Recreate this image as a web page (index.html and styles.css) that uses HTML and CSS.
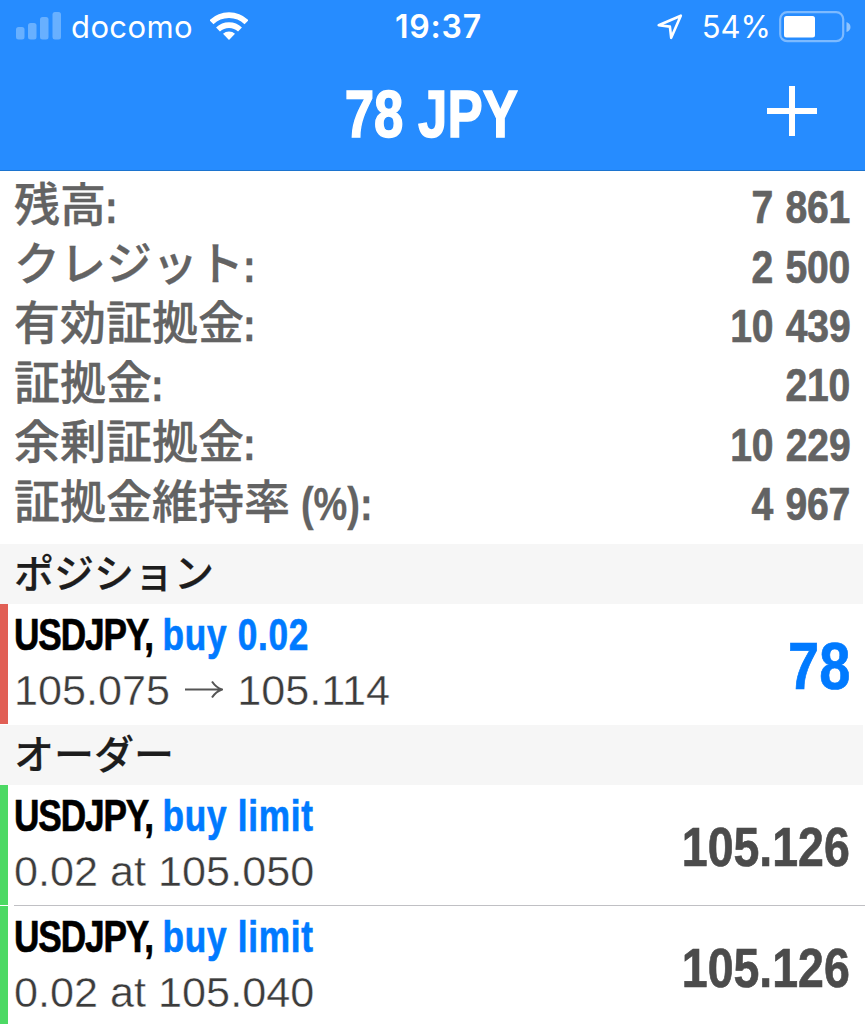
FILE: index.html
```html
<!DOCTYPE html>
<html lang="ja">
<head>
<meta charset="utf-8">
<title>78 JPY</title>
<link rel="stylesheet" href="styles.css">
</head>
<body>
<header class="top">
  <div class="status">
    <div class="carrier">
      <svg class="signal" width="46" height="28" viewBox="0 0 46 28"><rect x="0" y="15" width="8.5" height="12.5" rx="2.5"/><rect x="12" y="11" width="8.5" height="16.5" rx="2.5"/><rect x="24" y="5" width="8.5" height="22.5" rx="2.5"/><rect x="36.500" y="0" width="8.500" height="27.500" rx="2.500"/></svg>
      <span class="docomo">docomo</span>
      <svg class="wifi" width="38" height="28" viewBox="0 0 38 28"><g fill="none" stroke="#fff" stroke-width="5.600"><path d="M1.500 10.300a25 25 0 0 1 35 0"/><path d="M8 17.500a16 16 0 0 1 22 0"/></g><path fill="#fff" d="M13 21.700a9 9 0 0 1 12 0l-6 6.200z"/></svg>
    </div>
    <div class="clock">19:37</div>
    <div class="power">
      <svg width="26" height="26" viewBox="0 0 26 26"><path d="M1.700 11.200L23.800 1.700 14.200 23.800 12.900 12.600z" fill="none" stroke="#fff" stroke-width="2.600" stroke-linejoin="round"/></svg>
      <span class="percent">54%</span>
      <svg class="battery" width="73" height="32" viewBox="0 0 73 32"><rect x="1.200" y="1.200" width="63" height="29" rx="7" fill="none" stroke="#7dbaff" stroke-width="2.200"/><rect x="5" y="5" width="31" height="21.500" rx="2.500" fill="#fff"/><path d="M67.500 11q4 1.500 4 5t-4 5z" fill="#8fc4ff"/></svg>
    </div>
  </div>
  <div class="nav">
    <h1 class="title"><span class="cond">78 JPY</span></h1>
    <svg class="plus" width="50" height="50" viewBox="0 0 50 50"><path d="M25 0v50M0 25h50" stroke="#fff" stroke-width="6"/></svg>
  </div>
</header>
<main>
  <dl class="account">
    <div class="line"><dt>残高<span class="mark">:</span></dt><dd class="cond">7 861</dd></div>
    <div class="line"><dt>クレジット<span class="mark">:</span></dt><dd class="cond">2 500</dd></div>
    <div class="line"><dt>有効証拠金<span class="mark">:</span></dt><dd class="cond">10 439</dd></div>
    <div class="line"><dt>証拠金<span class="mark">:</span></dt><dd class="cond">210</dd></div>
    <div class="line"><dt>余剰証拠金<span class="mark">:</span></dt><dd class="cond">10 229</dd></div>
    <div class="line"><dt>証拠金維持率<span class="mark unit">(%):</span></dt><dd class="cond">4 967</dd></div>
  </dl>
  <h2 class="section">ポジション</h2>
  <article class="trade position">
    <div class="info"><div class="symbol cond"><b>USDJPY,</b><span class="side">buy 0.02</span></div>
    <div class="detail"><span>105.075</span><svg class="arrow" width="38" height="20" viewBox="0 0 38 20"><path d="M0 10.500h37M27 2.500q4 6 10 8q-6 2-10 8" fill="none" stroke="#555" stroke-width="2"/></svg><span>105.114</span></div></div>
    <div class="profit cond">78</div>
  </article>
  <h2 class="section">オーダー</h2>
  <article class="trade order">
    <div class="info"><div class="symbol cond"><b>USDJPY,</b><span class="side">buy limit</span></div>
    <div class="detail">0.02 at 105.050</div></div>
    <div class="price cond">105.126</div>
  </article>
  <hr class="divider">
  <article class="trade order">
    <div class="info"><div class="symbol cond"><b>USDJPY,</b><span class="side">buy limit</span></div>
    <div class="detail">0.02 at 105.040</div></div>
    <div class="price cond">105.126</div>
  </article>
</main>
</body>
</html>
```
FILE: styles.css
```css
* { box-sizing: border-box; }
body { margin: 0; width: 865px; height: 1024px; overflow: hidden; background: #fff; font-family: "Liberation Sans", "Noto Sans CJK JP", sans-serif; }
h1, h2, dl, dd { margin: 0; }
svg { display: block; flex: none; }

/* horizontally condensed bold face */
.cond { display: inline-block; white-space: nowrap; font-weight: 700; transform: scaleX(.85); transform-origin: right center; -webkit-text-stroke: .7px currentColor; }

.top { height: 171px; background: #268cff; border-bottom: 1px solid #1c74cf; color: #fff; }
.status { height: 54px; display: grid; grid-template-columns: 1fr auto 1fr; align-items: center; padding: 0 15px 0 16px; font: 400 32px/54px Inter, "Liberation Sans", sans-serif; }
.carrier { display: flex; align-items: center; }
.signal { fill: #68b0ff; margin: -2px 9px 0 0; }
.docomo { font-size: 31px; letter-spacing: .4px; }
.wifi { margin: -2px 0 0 17px; }
.clock { font-weight: 600; letter-spacing: .8px; padding-left: 11px; }
.power { display: flex; align-items: center; justify-content: flex-end; margin-right: -2px; }
.percent { font-size: 31px; margin: 0 8px 0 19px; }
.nav { height: 116px; display: grid; grid-template-columns: 1fr auto 1fr; align-items: center; padding-right: 48px; }
.title { grid-column: 2; font-size: 66px; line-height: 80px; margin: 4px 0 0 46px; }
.title .cond { transform: scaleX(.8); transform-origin: center; -webkit-text-stroke-width: 1.5px; }
.plus { justify-self: end; margin-top: -2px; }

.account { height: 373px; padding: 7px 15px 0 14px; color: #636363; }
.line { height: 59.4px; display: flex; justify-content: space-between; align-items: center; font-size: 46px; line-height: 55px; }
.line dt { font-weight: 500; display: flex; white-space: nowrap; margin-top: -3px; -webkit-text-stroke: .3px currentColor; }
.line dd { letter-spacing: -.2px; word-spacing: 2px; }
.mark { font-weight: 700; margin-left: -1px; padding-top: 2px; transform: scaleX(.824); transform-origin: left; }
.unit { margin-left: 11px; }

.section { height: 60px; width: 863px; padding-left: 14px; background: #f6f6f6; color: #1d1d1d; font: 500 40px/55px "Noto Sans CJK JP", sans-serif; -webkit-text-stroke: .2px currentColor; }
.trade { height: 120px; display: flex; justify-content: space-between; align-items: center; padding: 0 15px 0 6px; border-left: 8px solid #4cd964; }
.position { border-left-color: #e15f55; margin-bottom: 1px; }
.info { display: flex; flex-direction: column; align-items: flex-start; margin-top: -4px; }
.symbol { font-size: 44px; line-height: 56px; transform: scaleX(.8); transform-origin: left center; }
.symbol b { color: #000; letter-spacing: -1.400px; margin-right: 12px; }
.side { color: #007aff; letter-spacing: .9px; }
.detail { display: flex; align-items: center; gap: 14.500px; font-size: 43.200px; line-height: 54px; color: #3c3c3c; -webkit-text-stroke: .4px #fff; }
.arrow { margin-top: -2px; }
.profit { font-size: 66px; color: #007aff; margin-top: 3px; }
.price { font-size: 55px; color: #4b4b4b; transform: scaleX(.845); margin-top: 3px; }
.divider { height: 1px; margin: 0 0 0 14px; border: 0; background: #c0c0c4; }
```
